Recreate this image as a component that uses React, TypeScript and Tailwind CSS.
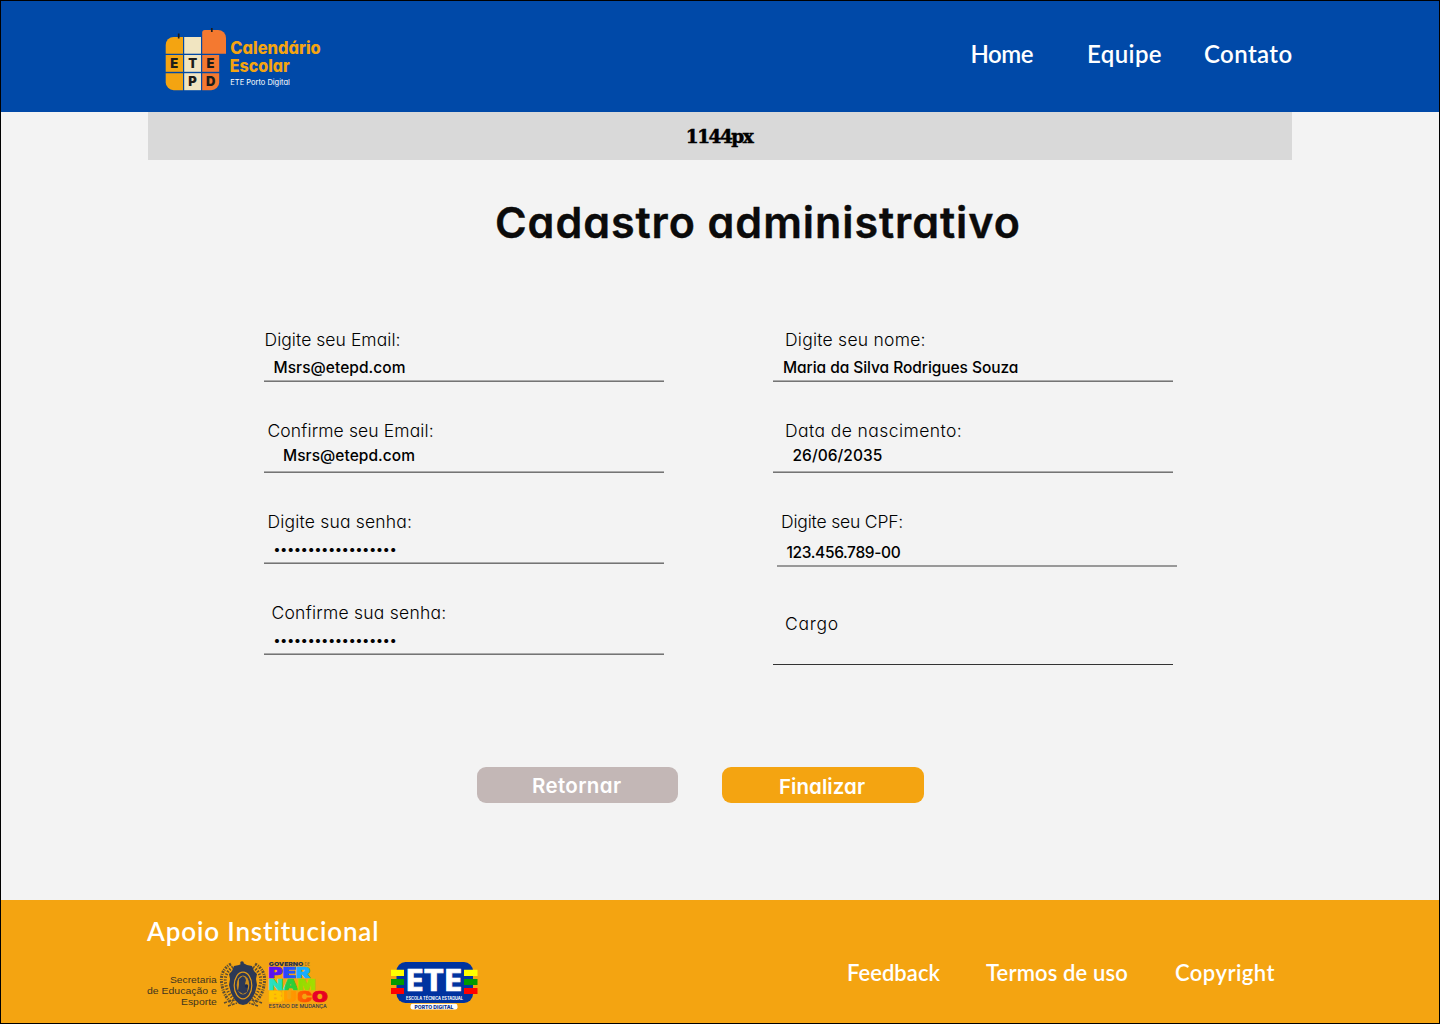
import type { ReactNode } from 'react';

const BULLETS = '•'.repeat(18);

function CalendarLogo() {
  return (
    <svg width="160" height="64" viewBox="164 28 160 64" className="block">
      <path d="M165.7 53.7V45a8 8 0 0 1 8-8H183v16.7z" fill="#f4a411" />
      <rect x="184.2" y="37" width="16.8" height="16.7" fill="#f1e5c1" />
      <path d="M202.2 53.7V32.5a2.5 2.5 0 0 1 2.5-2.5H218a8 8 0 0 1 8 8v15.7z" fill="#f47930" />
      <rect x="165.7" y="55" width="17.3" height="16.8" fill="#f4a411" />
      <rect x="184.2" y="55" width="16.8" height="16.8" fill="#f1e5c1" />
      <rect x="202.2" y="55" width="17" height="16.8" fill="#f47930" />
      <path d="M165.7 73.2H183v17h-9.3a8 8 0 0 1-8-8z" fill="#f4a411" />
      <rect x="184.2" y="73.2" width="16.8" height="17" fill="#f1e5c1" />
      <path d="M202.2 73.2h17v9a8 8 0 0 1-8 8h-9z" fill="#f47930" />
      <path d="M178.7 33.5v5M211.8 27v5" stroke="#1d1d1b" strokeWidth="1.7" />
      <g className="font-['Inter'] text-[13px] font-black" fill="#1d1d1b" textAnchor="middle">
        <text x="174.2" y="68.1">E</text>
        <text x="192.6" y="68.1">T</text>
        <text x="210.5" y="68.1">E</text>
        <text x="192.6" y="86.3">P</text>
        <text x="210.7" y="86.3">D</text>
      </g>
      <g className="font-['Inter'] [font-feature-settings:'cv11']" fill="#f4a411">
        <text x="230.3" y="54" className="text-[17px] font-extrabold" textLength="90.5" lengthAdjust="spacingAndGlyphs">Calendário</text>
        <text x="229.8" y="72" className="text-[17px] font-extrabold" textLength="60" lengthAdjust="spacingAndGlyphs">Escolar</text>
        <text x="230.3" y="85" className="text-[7.5px] font-normal" fill="#fff" textLength="59.5" lengthAdjust="spacingAndGlyphs">ETE Porto Digital</text>
      </g>
    </svg>
  );
}

function PernambucoLogo() {
  return (
    <svg width="184" height="52" viewBox="146 959 184 52" className="block">
      <g className="font-['Liberation_Sans'] text-[9.3px] font-normal" fill="#3e3420">
        <text x="170" y="983" textLength="46.8" lengthAdjust="spacingAndGlyphs">Secretaria</text>
        <text x="147" y="994" textLength="69.8" lengthAdjust="spacingAndGlyphs">de Educação e</text>
        <text x="181" y="1005" textLength="35.8" lengthAdjust="spacingAndGlyphs">Esporte</text>
      </g>
      <g fill="none" stroke="#5c4d33">
        <path d="M231 964c-8 4-11 12-9 21 1 8 5 14 10 18M255 964c8 4 11 12 9 21-1 8-5 14-10 18" strokeWidth="3" strokeDasharray="2 1.2 1 1" />
        <path d="M233 967c-7 5-9 11-7 18 1 6 4 11 8 14M253 967c7 5 9 11 7 18-1 6-4 11-8 14" strokeWidth="3" strokeDasharray="1.4 1.6" />
        <path d="M224 1003q19-7 38 0M228 1006l9-3M258 1006l-9-3" strokeWidth="1.6" strokeDasharray="3 1" />
      </g>
      <path d="M243 963l4 2 5 1 2 5 3 3-1 5 1 6-2 8-4 7-4 4-4 1-4-1-4-4-4-7-2-8 1-6-1-5 3-3 2-5 5-1z" fill="#2d3955" />
      <ellipse cx="243" cy="985.5" rx="8.8" ry="13.3" fill="#2d3955" stroke="#e09a1a" strokeWidth="1.2" />
      <ellipse cx="243" cy="985" rx="6.3" ry="9.5" fill="#c98d20" />
      <path d="M239 979l4-3 3 4-1 4 3 3-1 5-4 2-5-3 1-6z" fill="#2d3955" />
      <circle cx="243.5" cy="979" r="2" fill="#2d3955" />
      <circle cx="246.5" cy="986" r="1.7" fill="#1b2a50" />
      <circle cx="242" cy="963" r="1.8" fill="#2d3955" />
      <defs>
        <linearGradient id="per">
          <stop offset="0" stopColor="#5b0df0" /><stop offset=".33" stopColor="#5517f2" /><stop offset=".34" stopColor="#2544ff" />
          <stop offset=".64" stopColor="#2458ff" /><stop offset=".65" stopColor="#18a8ff" /><stop offset="1" stopColor="#18b0ff" />
        </linearGradient>
        <linearGradient id="nam">
          <stop offset="0" stopColor="#2be0c8" /><stop offset=".34" stopColor="#26ddb0" /><stop offset=".36" stopColor="#1fcb50" />
          <stop offset=".6" stopColor="#35d02a" /><stop offset=".62" stopColor="#8edc00" /><stop offset="1" stopColor="#a5dd00" />
        </linearGradient>
        <linearGradient id="buco">
          <stop offset="0" stopColor="#ffc400" /><stop offset=".25" stopColor="#ffc400" /><stop offset=".26" stopColor="#ffa000" />
          <stop offset=".49" stopColor="#ff9200" /><stop offset=".5" stopColor="#ff6500" /><stop offset=".74" stopColor="#ff4800" />
          <stop offset=".75" stopColor="#e7002c" /><stop offset="1" stopColor="#e7001c" />
        </linearGradient>
      </defs>
      <g className="font-['Inter'] text-[14.5px] font-black" strokeWidth=".7">
        <text x="268.6" y="978.3" fill="url(#per)" stroke="url(#per)" textLength="41.5" lengthAdjust="spacingAndGlyphs">PER</text>
        <text x="268.6" y="990" fill="url(#nam)" stroke="url(#nam)" textLength="47" lengthAdjust="spacingAndGlyphs">NAM</text>
        <text x="268.6" y="1001.7" fill="url(#buco)" stroke="url(#buco)" textLength="59" lengthAdjust="spacingAndGlyphs">BUCO</text>
      </g>
      <g className="font-['Inter']" fill="#28334f">
        <text x="268.8" y="965.7" className="text-[5.4px] font-black" textLength="34.5" lengthAdjust="spacingAndGlyphs">GOVERNO</text>
        <text x="304.5" y="965.7" className="text-[5.4px] font-light" textLength="5.5" lengthAdjust="spacingAndGlyphs">DE</text>
        <text x="268.8" y="1007.7" className="text-[4.8px] font-medium" textLength="58" lengthAdjust="spacingAndGlyphs">ESTADO DE MUDANÇA</text>
      </g>
    </svg>
  );
}

function EteLogo() {
  return (
    <svg width="88" height="52" viewBox="390 959 88 52" className="block">
      <rect x="396.5" y="962" width="76.5" height="41" rx="9" fill="#0033a0" />
      <path d="M391 969.7h13v6.3h-13zM464 969.7h13.5v6.3H464z" fill="#ffff00" />
      <path d="M391 979h13v6h-13zM464 979h13.5v6H464z" fill="#009a00" />
      <path d="M391 988h13v6h-13zM464 988h13.5v6H464z" fill="#ff0000" />
      <text x="405" y="991.4" fill="#fff" stroke="#fff" strokeWidth=".7" className="font-['Open_Sans'] text-[29.5px] font-bold" textLength="57.5" lengthAdjust="spacingAndGlyphs">ETE</text>
      <text x="406" y="999.7" fill="#fff" className="font-['Inter'] text-[4.5px] font-bold" textLength="57" lengthAdjust="spacingAndGlyphs">ESCOLA TÉCNICA ESTADUAL</text>
      <rect x="410.5" y="1003.8" width="47" height="5.7" rx="2.2" fill="#fff" />
      <text x="414.5" y="1008.6" fill="#0a2f8f" className="font-['Inter'] text-[5.2px] font-extrabold" textLength="39" lengthAdjust="spacingAndGlyphs">PORTO DIGITAL</text>
    </svg>
  );
}

type FieldProps = {
  label: string;
  value?: ReactNode;
  className: string;
  labelClass: string;
  valueClass?: string;
  lineClass?: string;
};

function Field({ label, value, className, labelClass, valueClass = 'text-[15.5px]', lineClass = 'h-[2px] border-t border-[#ababab] bg-[#747474]' }: FieldProps) {
  return (
    <div className={`flex w-[400px] flex-col ${className}`}>
      <label className={`block whitespace-nowrap text-[17.5px] leading-5 font-light text-black ${labelClass}`}>{label}</label>
      <div className={`whitespace-nowrap leading-5 font-medium text-black ${valueClass}`}>{value}</div>
      <div className={`mt-auto w-full shrink-0 ${lineClass}`} />
    </div>
  );
}

export default function App() {
  return (
    <div className="flex h-[1024px] w-[1440px] flex-col overflow-hidden border border-black bg-[#f3f3f3] font-['Inter',sans-serif] [font-feature-settings:'cv11']">
      <header className="flex h-[111px] shrink-0 items-start justify-between bg-[#0049a8] pr-[147px] pl-[163px]">
        <div className="pt-[27px]"><CalendarLogo /></div>
        <nav className="flex pt-[37px] font-['Lato'] text-2xl leading-8 font-semibold text-white">
          <a className="w-[116.5px] tracking-[-0.5px]">Home</a>
          <a className="w-[117px] tracking-[0.4px]">Equipe</a>
          <a className="w-[88px] tracking-[0.4px]">Contato</a>
        </nav>
      </header>

      <div className="mx-[147px] flex h-12 shrink-0 items-center justify-center bg-[#d9d9d9] pt-[2px] pr-[2px] font-['DejaVu_Serif'] text-[18.5px] leading-6 font-bold tracking-[-1.5px] text-black [-webkit-text-stroke:0.5px_black]">1144px</div>

      <main className="flex flex-1 flex-col">
        <h1 className="mt-[38px] ml-[494px] text-[43px] leading-[48px] font-semibold tracking-[0.94px] whitespace-nowrap text-[#0b0b0b] [-webkit-text-stroke:0.4px_#0b0b0b]">Cadastro administrativo</h1>

        <form className="mt-[84px] flex pl-[263px]">
          <div className="flex w-[509px] flex-col">
            <Field label="Digite seu Email:" value="Msrs@etepd.com" className="h-[52px]" labelClass="pl-[0.5px] tracking-[0.05px]" valueClass="mt-[8px] pl-[9.5px] text-[15.5px] tracking-[0.05px]" />
            <Field label="Confirme seu Email:" value="Msrs@etepd.com" className="mt-[39px] h-[52px]" labelClass="pl-[3.5px] tracking-[0.12px]" valueClass="mt-[5px] pl-[19px] text-[15.5px] tracking-[0.05px]" />
            <Field label="Digite sua senha:" value={BULLETS} className="mt-[39px] h-[52px]" labelClass="pl-[3.5px] tracking-[0.18px]" valueClass="mt-[7px] pl-[9.5px] text-[13px] tracking-[-0.1px]" />
            <Field label="Confirme sua senha:" value={BULLETS} className="mt-[39px] h-[52px]" labelClass="pl-[7.5px] tracking-[0.24px]" valueClass="mt-[7px] pl-[9.5px] text-[13px] tracking-[-0.1px]" />
          </div>
          <div className="flex flex-col">
            <Field label="Digite seu nome:" value="Maria da Silva Rodrigues Souza" className="h-[52px]" labelClass="pl-[12px] tracking-[0.24px]" valueClass="mt-[8px] pl-[10px] text-[15.5px] tracking-[-0.06px]" />
            <Field label="Data de nascimento:" value="26/06/2035" className="mt-[39px] h-[52px]" labelClass="pl-[12px] tracking-[0.42px]" valueClass="mt-[5px] pl-[19.5px] text-[15.5px] tracking-[0.05px]" />
            <Field label="Digite seu CPF:" value="123.456.789-00" className="mt-[39px] ml-[4px] h-[55px]" labelClass="pl-[4px] tracking-[-0.18px]" valueClass="mt-[11px] pl-[9.5px] text-[15.5px] tracking-[-0.36px]" lineClass="h-[2px] bg-[#999]" />
            <Field label="Cargo" className="mt-[47px] h-[51px]" labelClass="pl-[12px] tracking-[0.75px]" lineClass="h-px bg-[#333]" />
          </div>
        </form>

        <div className="mt-[102px] ml-[475.5px] flex gap-[44px] text-[20.5px] leading-9 font-semibold text-white">
          <button className="h-9 w-[201.5px] rounded-[9px] bg-[#c3b7b6] text-left"><span className="block pt-px pl-[55.5px] tracking-[0.35px]">Retornar</span></button>
          <button className="h-9 w-[201.5px] rounded-[9px] bg-[#f4a411] text-left"><span className="block pt-[2px] pl-[57px] tracking-[0.05px]">Finalizar</span></button>
        </div>
      </main>

      <footer className="flex h-[123px] shrink-0 justify-between bg-[#f4a411] pl-[145px] font-['Lato'] font-semibold text-white">
        <div className="pt-[15px]">
          <h2 className="pl-[1px] text-[26px] leading-8 tracking-[0.86px]">Apoio Institucional</h2>
          <div className="mt-[12px] flex gap-[60px]">
            <PernambucoLogo />
            <EteLogo />
          </div>
        </div>
        <nav className="flex pt-[57px] text-[22px] leading-8">
          <a className="w-[139px] tracking-[0.03px]">Feedback</a>
          <a className="w-[189px] tracking-[0.13px]">Termos de uso</a>
          <a className="w-[264px] tracking-[0.46px]">Copyright</a>
        </nav>
      </footer>
    </div>
  );
}
